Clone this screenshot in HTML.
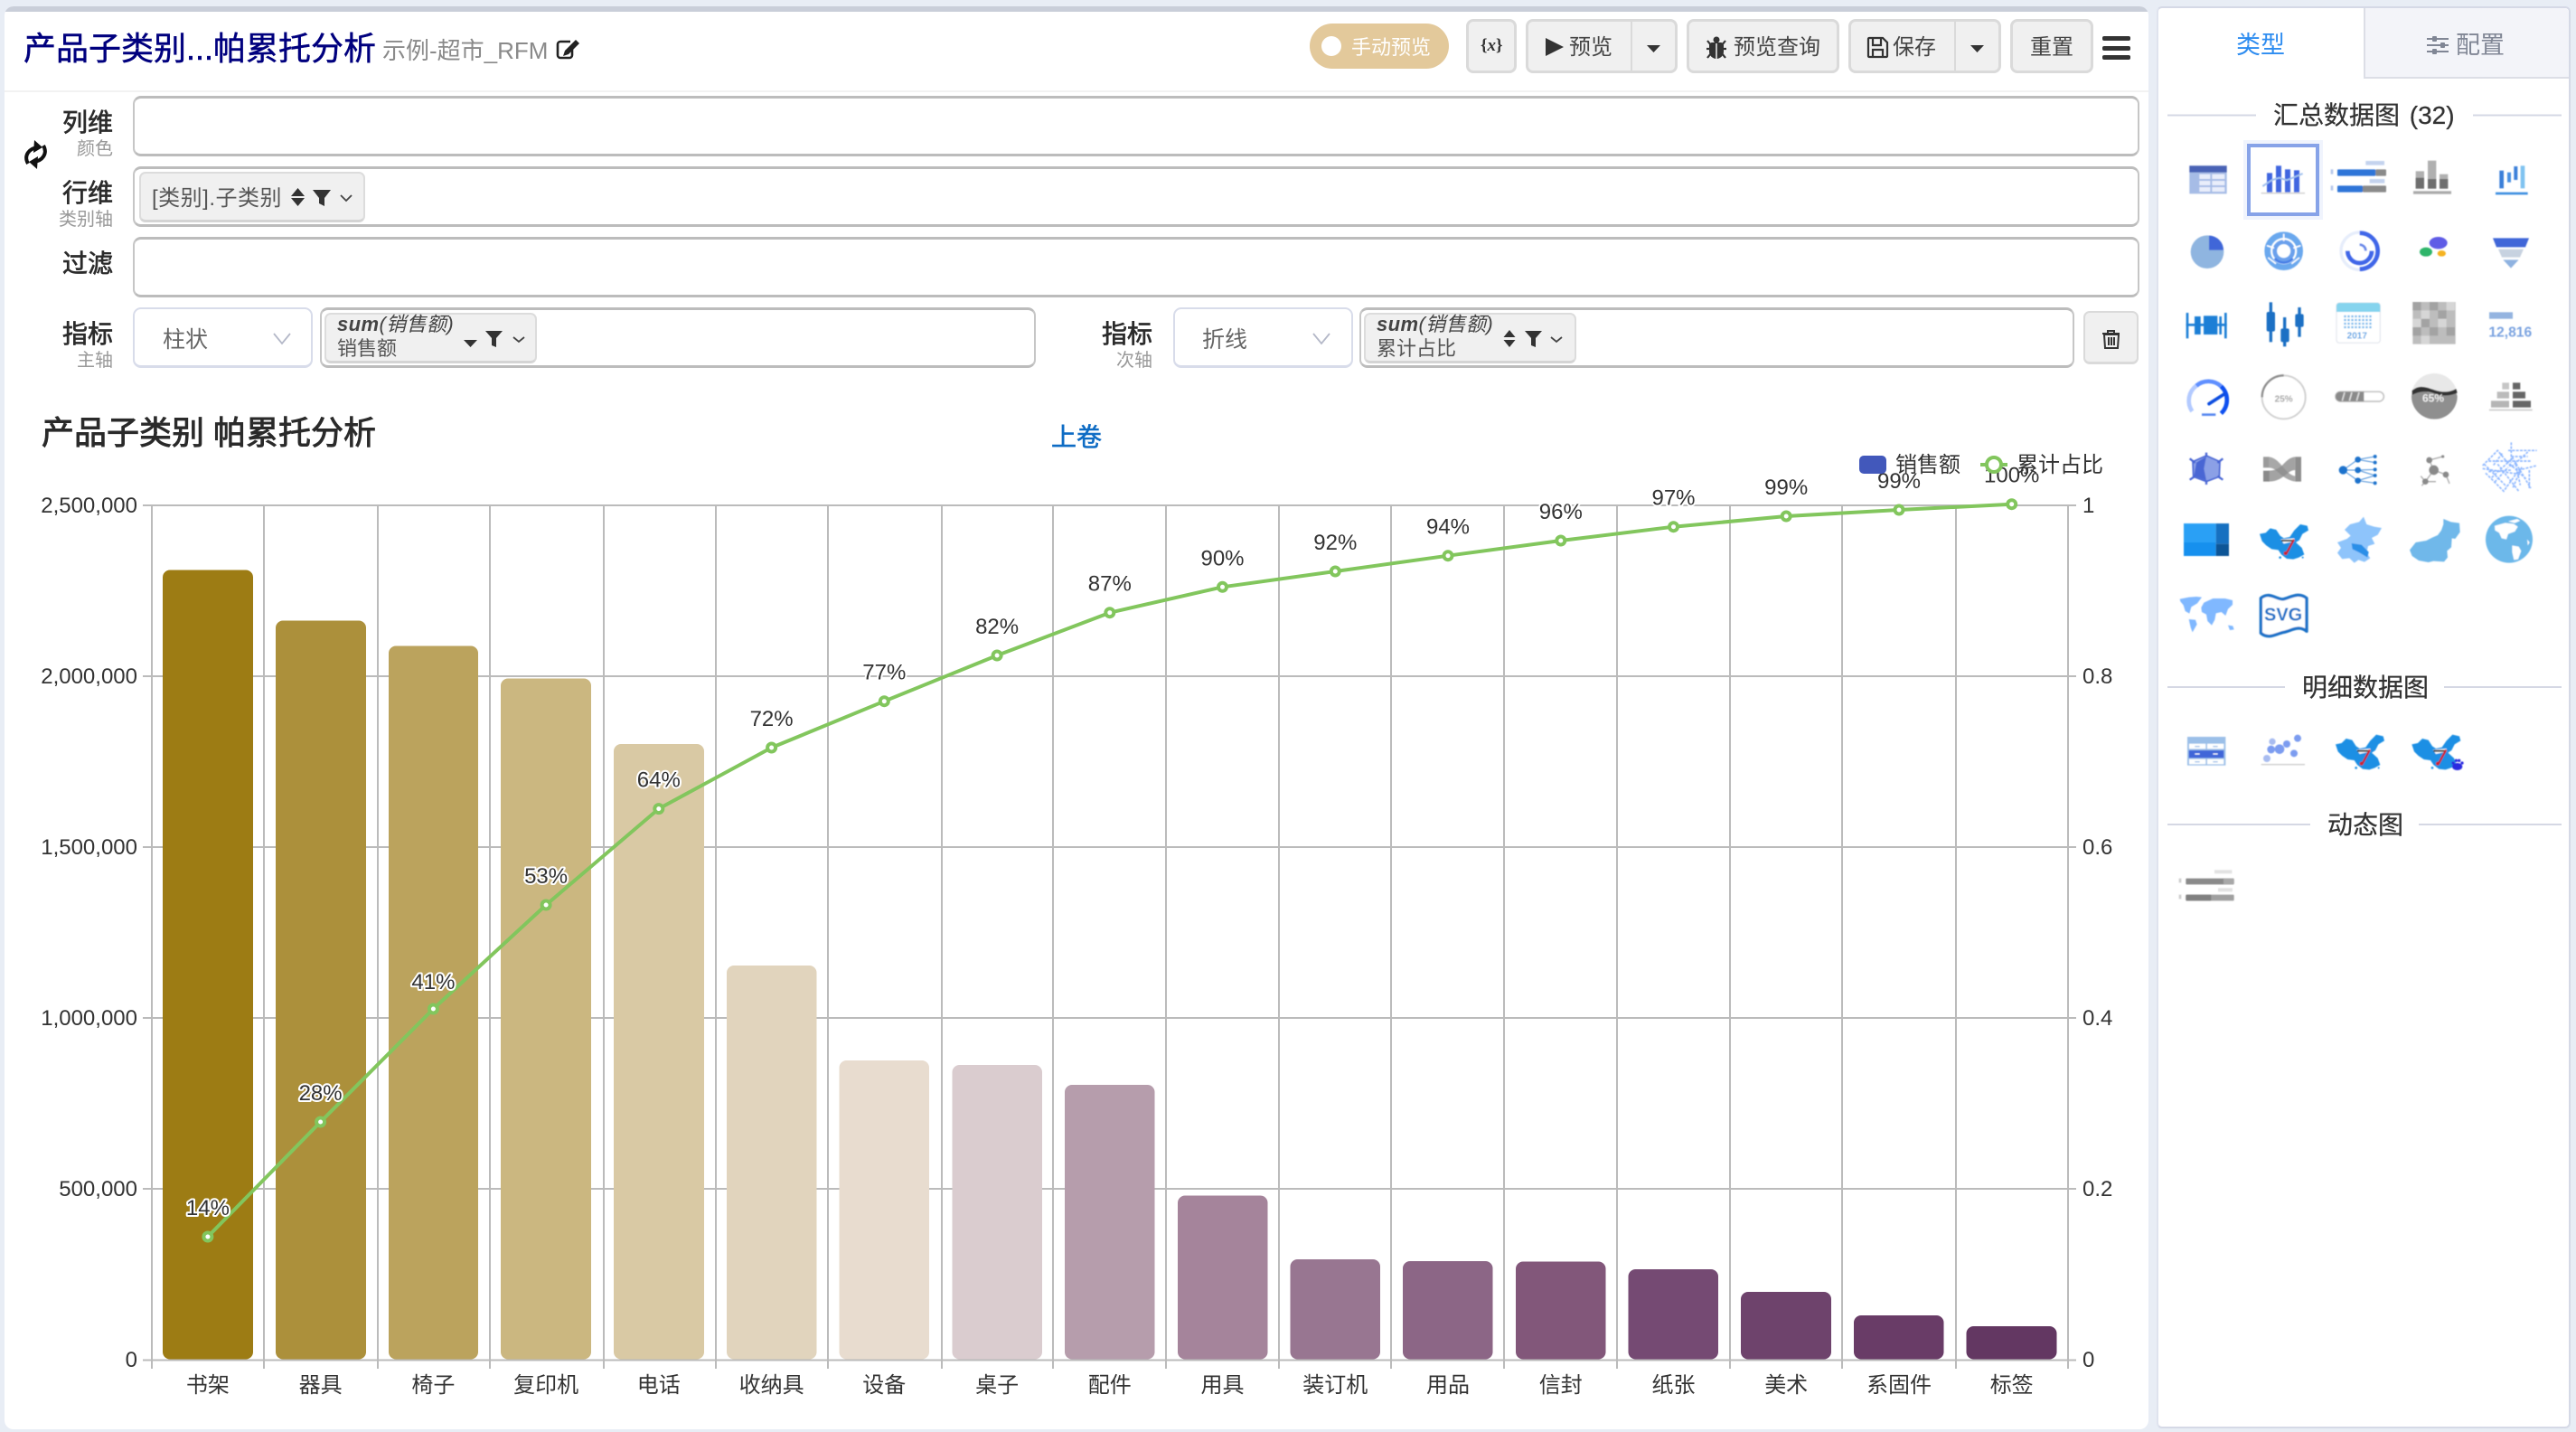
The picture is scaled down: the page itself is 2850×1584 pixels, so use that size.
<!DOCTYPE html>
<html lang="zh"><head><meta charset="utf-8"><title>帕累托分析</title>
<style>
html,body{margin:0;padding:0;width:2850px;height:1584px;overflow:hidden;background:#e8edf5}
body{font-family:"Liberation Sans","Noto Sans CJK SC",sans-serif;position:relative;color:#333}
.a{position:absolute;box-sizing:border-box}
.t{position:absolute;white-space:nowrap;line-height:40px;height:40px}
.box{position:absolute;box-sizing:border-box;left:147px;width:2220px;height:67px;background:#fff;border:2px solid #c6c6c6;border-top:3px solid #bcbcbc;border-bottom:3px solid #bcbcbc;border-radius:9px}
.lab{position:absolute;white-space:nowrap;line-height:40px;height:40px;right:2725px;font-size:28px;font-weight:400;color:#2b2b2b;-webkit-text-stroke:.7px #2b2b2b}
.sub{position:absolute;white-space:nowrap;line-height:30px;height:30px;right:2725px;font-size:20px;color:#999}
.tag{position:absolute;box-sizing:border-box;background:#f0f0f0;border:2px solid #dcdcdc;border-bottom:3px solid #d4d4d4;border-radius:7px;height:56px}
.btn{position:absolute;box-sizing:border-box;top:21px;height:60px;background:#f0f0f0;border:3px solid #dadada;border-radius:8px}
.sel{position:absolute;box-sizing:border-box;top:340px;height:67px;width:199px;background:#fff;border:2px solid #d8dcea;border-bottom:3px solid #d8dcea;border-radius:9px}
svg{position:absolute;left:0;top:0}
</style></head><body>

<!-- left panel -->
<div class="a" style="left:5px;top:7px;width:2372px;height:1574px;background:#fff;border-radius:10px;overflow:hidden"><div style="height:6px;background:#c9ced9"></div></div>
<div class="a" style="left:5px;top:100px;width:2372px;height:2px;background:#f2f2f2"></div>

<!-- right panel -->
<div class="a" style="left:2386px;top:7px;width:458px;height:1573px;background:#fff;border:2px solid #d5d9e6;border-left:2px solid #dfe3ee;border-radius:6px"></div>
<div class="a" style="left:2615px;top:9px;width:227px;height:78px;background:#f3f4f9;border-left:2px solid #dcdee6;border-bottom:2px solid #dcdee6;border-radius:0 5px 0 0"></div>

<!-- title -->
<div class="t" style="left:26px;top:34px;font-size:36px;color:#00007e;-webkit-text-stroke:.5px #00007e">产品子类别...帕累托分析</div>
<div class="t" style="left:423px;top:36px;font-size:26px;color:#8a8a8a">示例-超市_RFM</div>

<!-- toolbar -->
<div class="a" style="left:1449px;top:26px;width:154px;height:50px;background:#e3c99b;border-radius:25px"></div>
<div class="a" style="left:1462px;top:40px;width:22px;height:22px;background:#fff;border-radius:50%"></div>
<div class="t" style="left:1495px;top:33px;font-size:22px;color:#fff">手动预览</div>
<div class="btn" style="left:1622px;width:56px"></div>
<div class="t" style="left:1638px;top:31px;font-size:19px;font-weight:700;font-family:'Liberation Serif',serif;color:#333">{<i>x</i>}</div>
<div class="btn" style="left:1688px;width:168px"></div>
<div class="a" style="left:1804px;top:23px;width:2px;height:56px;background:#dadada"></div>
<div class="t" style="left:1736px;top:33px;font-size:24px;color:#444">预览</div>
<div class="btn" style="left:1866px;width:169px"></div>
<div class="t" style="left:1918px;top:33px;font-size:24px;color:#444">预览查询</div>
<div class="btn" style="left:2045px;width:169px"></div>
<div class="a" style="left:2162px;top:23px;width:2px;height:56px;background:#dadada"></div>
<div class="t" style="left:2094px;top:33px;font-size:24px;color:#444">保存</div>
<div class="btn" style="left:2224px;width:92px"></div>
<div class="t" style="left:2246px;top:33px;font-size:24px;color:#444">重置</div>
<div class="a" style="left:2326px;top:40px;width:31px;height:5px;background:#333;border-radius:2px"></div>
<div class="a" style="left:2326px;top:51px;width:31px;height:5px;background:#333;border-radius:2px"></div>
<div class="a" style="left:2326px;top:61px;width:31px;height:5px;background:#333;border-radius:2px"></div>

<!-- form rows -->
<div class="lab" style="top:116px">列维</div><div class="sub" style="top:150px">颜色</div>
<div class="lab" style="top:194px">行维</div><div class="sub" style="top:228px">类别轴</div>
<div class="lab" style="top:272px">过滤</div>
<div class="lab" style="top:350px">指标</div><div class="sub" style="top:384px">主轴</div>
<div class="box" style="top:106px"></div>
<div class="box" style="top:184px"></div>
<div class="box" style="top:262px"></div>
<div class="tag" style="left:154px;top:190px;width:250px"></div>
<div class="t" style="left:168px;top:200px;font-size:24px;color:#555;letter-spacing:.5px">[类别].子类别</div>

<div class="sel" style="left:147px"></div>
<div class="t" style="left:180px;top:356px;font-size:25px;color:#666">柱状</div>
<div class="box" style="left:354px;top:340px;width:792px"></div>
<div class="tag" style="left:359px;top:346px;width:235px"></div>
<div class="t" style="left:373px;top:339px;font-size:22px;color:#444;font-style:italic;letter-spacing:.4px"><b>sum</b>(销售额)</div>
<div class="t" style="left:373px;top:366px;font-size:22px;color:#555">销售额</div>

<div class="lab" style="top:350px;right:auto;left:1219px">指标</div>
<div class="sub" style="top:384px;right:auto;left:1235px">次轴</div>
<div class="sel" style="left:1298px"></div>
<div class="t" style="left:1330px;top:356px;font-size:25px;color:#666">折线</div>
<div class="box" style="left:1504px;top:340px;width:791px"></div>
<div class="tag" style="left:1509px;top:346px;width:235px"></div>
<div class="t" style="left:1523px;top:339px;font-size:22px;color:#444;font-style:italic;letter-spacing:.4px"><b>sum</b>(销售额)</div>
<div class="t" style="left:1523px;top:366px;font-size:22px;color:#555">累计占比</div>
<div class="a" style="left:2305px;top:344px;width:61px;height:59px;background:#f0f0f0;border:2px solid #dadada;border-bottom:3px solid #dadada;border-radius:7px"></div>

<!-- small UI icons -->
<svg width="2850" height="1584" viewBox="0 0 2850 1584">
 <!-- edit -->
 <g fill="none" stroke="#222" stroke-width="2.6"><path d="M633 54v7a3 3 0 0 1-3 3h-10a3 3 0 0 1-3-3V49a3 3 0 0 1 3-3h11"/></g>
 <path d="M637 44l4 4-12 12-6 2 2-6z" fill="#222"/>
 <!-- sync -->
 <g fill="none" stroke="#111" stroke-width="4"><path d="M42 163C32 164 26 172 31 181"/><path d="M37 179C47 178 53 170 48 161"/></g>
 <path d="M38 155L47 163L37 169ZM41 187L32 179L42 173Z" fill="#111"/>
 <!-- play + carets -->
 <path d="M1710 42l20 10-20 10z" fill="#333"/>
 <path d="M1822 50h15l-7.500 8z" fill="#333"/>
 <path d="M2180 50h15l-7.500 8z" fill="#333"/>
 <!-- bug -->
 <g fill="#333"><circle cx="1899" cy="44" r="3.500"/><path d="M1894 47h10a3 3 0 0 1 3 3v7a8 8 0 0 1-16 0v-7a3 3 0 0 1 3-3z"/></g>
 <g stroke="#333" stroke-width="2.200" fill="none"><path d="M1889 45l4 5M1909 45l-4 5M1888 54h5M1910 54h-5M1889 64l4-5M1909 64l-4-5"/></g>
 <path d="M1899 48v18" stroke="#f0f0f0" stroke-width="1.500"/>
 <!-- floppy -->
 <g fill="none" stroke="#333" stroke-width="2.200"><path d="M2068 42h15l5 5v15a1 1 0 0 1-1 1h-19a1 1 0 0 1-1-1V43a1 1 0 0 1 1-1z"/><path d="M2072 43v7h9v-7M2072 62v-7h11v7"/></g>
 <!-- sort / filter / chevrons : tag1 -->
 <path d="M329.500 208l7.500 9h-15zM329.500 228l-7.500-9h15z" fill="#333"/>
 <path d="M346 210h20l-7 9v9l-6-3v-6z" fill="#333"/>
 <path d="M377 216l6 6 6-6" fill="none" stroke="#444" stroke-width="1.800"/>
 <!-- tag2 -->
 <path d="M513 376h15l-7.500 8z" fill="#333"/>
 <path d="M537 366h19l-7 8v10l-5-2v-8z" fill="#333"/>
 <path d="M568 373l6 5 6-5" fill="none" stroke="#444" stroke-width="1.800"/>
 <!-- tag3 -->
 <path d="M1670 365l6.500 8h-13zM1670 384l-6.500-8h13z" fill="#333"/>
 <path d="M1687 366h19l-7 8v10l-5-2v-8z" fill="#333"/>
 <path d="M1716 373l6 5 6-5" fill="none" stroke="#444" stroke-width="1.800"/>
 <!-- select chevrons -->
 <path d="M303 369l9 11 9-11M1453 369l9 11 9-11" fill="none" stroke="#b4b8c8" stroke-width="1.800"/>
 <!-- trash -->
 <g fill="none" stroke="#333" stroke-width="2"><path d="M2328 370h16l-1 15h-14zM2326 369h19M2332 369v-3h7v3M2333 373v9M2336 373v9M2339 373v9"/></g>
 <!-- sliders -->
 <g stroke="#808695" stroke-width="2"><path d="M2685 43h24M2685 50h24M2685 57h24"/></g>
 <g fill="#808695"><rect x="2691" y="40" width="5" height="6" rx="1"/><rect x="2700" y="47" width="5" height="6" rx="1"/><rect x="2691" y="54" width="5" height="6" rx="1"/></g>

 <!-- CHART -->
 <g stroke="#bbb" stroke-width="2" fill="none">
  <path d="M158 559H2297M158 748H2297M158 937H2297M158 1126H2297M158 1315H2297M158 1504.500H2297"/>
  <path d="M168 559V1514M292 559V1514M418 559V1514M542 559V1514M668 559V1514M792 559V1514M916 559V1514M1042 559V1514M1165 559V1514M1290 559V1514M1415 559V1514M1539 559V1514M1664 559V1514M1789 559V1514M1914 559V1514M2038 559V1514M2164 559V1514M2288 559V1514"/>
 </g>
 <g>
  <rect x="180" y="630.500" width="100" height="873" rx="8" fill="#9d7c14"/>
  <rect x="305" y="686.500" width="100" height="817" rx="8" fill="#ac903b"/>
  <rect x="430" y="714.500" width="99" height="789" rx="8" fill="#bba35d"/>
  <rect x="554" y="750.500" width="100" height="753" rx="8" fill="#cbb780"/>
  <rect x="679" y="823" width="100" height="680.500" rx="8" fill="#d9c9a4"/>
  <rect x="804" y="1068" width="99.500" height="435.500" rx="8" fill="#e1d4bd"/>
  <rect x="928.500" y="1173" width="99.500" height="330.500" rx="8" fill="#e8dccf"/>
  <rect x="1053.500" y="1178" width="99.500" height="325.500" rx="8" fill="#dacccf"/>
  <rect x="1178" y="1200" width="99.500" height="303.500" rx="8" fill="#b69dac"/>
  <rect x="1303" y="1322.500" width="99.500" height="181" rx="8" fill="#a5849b"/>
  <rect x="1427.500" y="1393" width="99.500" height="110.500" rx="8" fill="#987691"/>
  <rect x="1552" y="1395" width="99.500" height="108.500" rx="8" fill="#8c6686"/>
  <rect x="1677" y="1395.500" width="99.500" height="108" rx="8" fill="#82577a"/>
  <rect x="1801.500" y="1404" width="99.500" height="99.500" rx="8" fill="#754a73"/>
  <rect x="1926" y="1429" width="100" height="74.500" rx="8" fill="#6e436c"/>
  <rect x="2051" y="1455" width="99.500" height="48.500" rx="8" fill="#693c67"/>
  <rect x="2175.500" y="1467" width="100" height="36.500" rx="8" fill="#633762"/>
 </g>
 <polyline fill="none" stroke="#82c65d" stroke-width="4" stroke-linejoin="round" points="229.900,1368 354.600,1241 479.400,1116 604.100,1001 728.800,894.600 853.600,827 978.300,775.700 1103.100,725 1227.800,677.700 1352.500,649.300 1477.300,632 1602,614.700 1726.800,598 1851.500,582.700 1976.200,571 2101,564 2225.700,557.700"/>
 <g fill="#fff" stroke="#82c65d" stroke-width="4">
  <circle cx="229.900" cy="1368" r="4.500"/><circle cx="354.600" cy="1241" r="4.500"/><circle cx="479.400" cy="1116" r="4.500"/><circle cx="604.100" cy="1001" r="4.500"/><circle cx="728.800" cy="894.600" r="4.500"/><circle cx="853.600" cy="827" r="4.500"/><circle cx="978.300" cy="775.700" r="4.500"/><circle cx="1103.100" cy="725" r="4.500"/><circle cx="1227.800" cy="677.700" r="4.500"/><circle cx="1352.500" cy="649.300" r="4.500"/><circle cx="1477.300" cy="632" r="4.500"/><circle cx="1602" cy="614.700" r="4.500"/><circle cx="1726.800" cy="598" r="4.500"/><circle cx="1851.500" cy="582.700" r="4.500"/><circle cx="1976.200" cy="571" r="4.500"/><circle cx="2101" cy="564" r="4.500"/><circle cx="2225.700" cy="557.700" r="4.500"/>
 </g>
 <g font-family="'Liberation Sans','Noto Sans CJK SC',sans-serif" font-size="24" fill="#333">
  <!-- y axis -->
  <g text-anchor="end">
   <text x="152" y="567">2,500,000</text><text x="152" y="756">2,000,000</text><text x="152" y="945">1,500,000</text><text x="152" y="1134">1,000,000</text><text x="152" y="1323">500,000</text><text x="152" y="1512">0</text>
  </g>
  <text x="2304" y="567">1</text><text x="2304" y="756">0.8</text><text x="2304" y="945">0.6</text><text x="2304" y="1134">0.4</text><text x="2304" y="1323">0.2</text><text x="2304" y="1512">0</text>
  <!-- x axis -->
  <g text-anchor="middle">
   <text x="229.900" y="1540">书架</text><text x="354.600" y="1540">器具</text><text x="479.400" y="1540">椅子</text><text x="604.100" y="1540">复印机</text><text x="728.800" y="1540">电话</text><text x="853.600" y="1540">收纳具</text><text x="978.300" y="1540">设备</text><text x="1103.100" y="1540">桌子</text><text x="1227.800" y="1540">配件</text><text x="1352.500" y="1540">用具</text><text x="1477.300" y="1540">装订机</text><text x="1602" y="1540">用品</text><text x="1726.800" y="1540">信封</text><text x="1851.500" y="1540">纸张</text><text x="1976.200" y="1540">美术</text><text x="2101" y="1540">系固件</text><text x="2225.700" y="1540">标签</text>
  </g>
  <!-- data labels -->
  <g text-anchor="middle" stroke="#fff" stroke-width="4" paint-order="stroke" stroke-linejoin="round">
   <text x="229.900" y="1344">14%</text><text x="354.600" y="1217">28%</text><text x="479.400" y="1094">41%</text><text x="604.100" y="977">53%</text><text x="728.800" y="870.600">64%</text><text x="853.600" y="803">72%</text><text x="978.300" y="751.700">77%</text><text x="1103.100" y="701">82%</text><text x="1227.800" y="653.700">87%</text><text x="1352.500" y="625.300">90%</text><text x="1477.300" y="608">92%</text><text x="1602" y="590.700">94%</text><text x="1726.800" y="574">96%</text><text x="1851.500" y="558.700">97%</text><text x="1976.200" y="547">99%</text><text x="2101" y="540">99%</text><text x="2225.700" y="533.700">100%</text>
  </g>
  <!-- legend -->
  <rect x="2057" y="504" width="30" height="20" rx="5" fill="#4258bb"/>
  <text x="2097" y="522">销售额</text>
  <path d="M2191 514h30" stroke="#82c65d" stroke-width="4"/>
  <circle cx="2206" cy="514" r="8" fill="#fff" stroke="#82c65d" stroke-width="4"/>
  <text x="2231" y="522">累计占比</text>
  <text x="46" y="491" font-size="36" fill="#2a2a2a" stroke="#2a2a2a" stroke-width=".9">产品子类别 帕累托分析</text>
  <text x="1163" y="493" font-size="28" fill="#0f6cc4" stroke="#0f6cc4" stroke-width=".6">上卷</text>
 </g>

 <!-- sidebar headings -->
 <g font-family="'Liberation Sans','Noto Sans CJK SC',sans-serif" fill="#333">
  <text x="2474" y="59" font-size="27" fill="#2d8cf0">类型</text>
  <text x="2717" y="59" font-size="27" fill="#808695">配置</text>
  <g font-size="28" stroke="#333" stroke-width=".25">
  <text x="2515" y="137" style="word-spacing:3px">汇总数据图 (32)</text>
  <text x="2547" y="770">明细数据图</text>
  <text x="2575" y="922">动态图</text>
  </g>
 </g>
 <g stroke="#d5d8e4" stroke-width="2">
  <path d="M2398 127.500H2496M2736 127.500H2834M2398 760H2528M2704 760H2834M2398 912H2556M2676 912H2834"/>
 </g>
 <rect x="2484" y="157" width="84" height="84" fill="none" stroke="#f0f4fd" stroke-width="4"/>
 <rect x="2488" y="161" width="76" height="76" fill="#fff" stroke="#87a3e8" stroke-width="4"/>

 <defs>
  <filter id="b" x="-5%" y="-5%" width="110%" height="110%"><feGaussianBlur stdDeviation="1.800"/></filter>
  <g id="cn">
   <path d="M390 572L410 568L425 553L445 558L458 578L470 586L490 582L505 560L525 540L548 545L552 560L532 572L522 592L510 600L530 618L538 640L520 650L502 656L480 654L462 640L452 625L430 622L412 610L398 596Z" fill="#1b8fe4"/>
   <circle cx="458" cy="650" r="4" fill="#1b8fe4"/><circle cx="533" cy="650" r="3" fill="#1b8fe4"/>
   <path d="M460 590L505 586L506 596L470 604Z" fill="#fff"/>
   <path d="M462 594H502" stroke="#333" stroke-width="6"/>
   <path d="M504 590L478 638" stroke="#d2232a" stroke-width="7"/>
   <circle cx="476" cy="636" r="6" fill="#d2232a"/>
  </g>
 </defs>

 <!-- icons rows 1-3 (zoom coords) -->
 <g filter="url(#b)" transform="translate(2370,0) scale(.33333)">
  <!-- table -->
  <rect x="157" y="550" width="124" height="93" fill="#a6bce6"/><rect x="157" y="550" width="124" height="22" fill="#4a62b5"/>
  <g fill="#e9eefb"><rect x="190" y="578" width="36" height="16"/><rect x="232" y="578" width="42" height="16"/><rect x="190" y="600" width="36" height="15"/><rect x="232" y="600" width="42" height="15"/><rect x="190" y="621" width="36" height="15"/><rect x="232" y="621" width="42" height="15"/></g>
  <!-- selected combo -->
  <g fill="#3f66e0"><rect x="414" y="574" width="18" height="64"/><rect x="444" y="550" width="18" height="88"/><rect x="474" y="562" width="18" height="76"/><rect x="504" y="565" width="18" height="73"/></g>
  <rect x="395" y="639" width="145" height="4" fill="#ccc"/>
  <path d="M400 618l30-20 25-8 25 8 25-10 28-12" fill="none" stroke="#9fc0ee" stroke-width="6"/>
  <!-- h bars -->
  <rect x="648" y="562" width="127" height="22" rx="3" fill="#2f74d8"/><rect x="775" y="562" width="35" height="22" rx="3" fill="#8a8a8a"/>
  <rect x="648" y="616" width="84" height="22" rx="3" fill="#2f74d8"/><rect x="732" y="616" width="78" height="22" rx="3" fill="#8a8a8a"/>
  <rect x="742" y="534" width="62" height="14" fill="#c4d3ee"/><rect x="755" y="594" width="50" height="14" fill="#c4d3ee"/>
  <rect x="626" y="562" width="8" height="16" fill="#b6c8ea"/><rect x="626" y="616" width="8" height="16" fill="#b6c8ea"/>
  <!-- stacked grey -->
  <g fill="#b0b0b0"><rect x="908" y="568" width="28" height="58"/><rect x="948" y="533" width="28" height="93"/><rect x="987" y="578" width="28" height="48"/></g>
  <g fill="#6e6e6e"><rect x="908" y="590" width="28" height="36"/><rect x="948" y="594" width="28" height="32"/><rect x="987" y="594" width="28" height="32"/></g>
  <rect x="900" y="634" width="126" height="10" fill="#aaa"/>
  <!-- waterfall -->
  <rect x="1186" y="566" width="14" height="59" fill="#3b7fd9"/><rect x="1212" y="572" width="12" height="33" fill="#4a90e2"/><rect x="1234" y="552" width="12" height="45" fill="#3b7fd9"/><rect x="1256" y="550" width="14" height="75" fill="#7fc3f0"/><rect x="1173" y="638" width="107" height="8" fill="#3b8ee0"/>
  <!-- pie -->
  <circle cx="216" cy="836" r="55" fill="#8fb5e0"/><path d="M222 830V782A48 48 0 0 1 270 830Z" fill="#3f66d8"/>
  <!-- donut -->
  <circle cx="470" cy="833" r="54" fill="none" stroke="#6aa8ee" stroke-width="20"/><circle cx="470" cy="833" r="30" fill="none" stroke="#6aa0ec" stroke-width="14"/>
  <path d="M500 858A40 40 0 0 1 440 858" fill="none" stroke="#4a80e6" stroke-width="8"/>
  <path d="M418 855l26 20M522 855l-26 20M470 776v24M414 815l24 8M526 815l-24 8" stroke="#fff" stroke-width="5"/>
  <!-- radial -->
  <circle cx="722" cy="833" r="62" fill="none" stroke="#e6edfb" stroke-width="10"/>
  <path d="M722 773A60 60 0 0 1 722 893" fill="none" stroke="#3f66e8" stroke-width="14"/>
  <path d="M762 833A40 40 0 0 1 682 833" fill="none" stroke="#3f66e8" stroke-width="14"/>
  <path d="M722 812A20 20 0 0 1 742 832" fill="none" stroke="#6a88e8" stroke-width="8"/>
  <!-- bubbles -->
  <ellipse cx="983" cy="806" rx="30" ry="20" fill="#5e5ce6"/><ellipse cx="942" cy="836" rx="21" ry="15" fill="#2fb56b"/><ellipse cx="994" cy="841" rx="14" ry="10" fill="#f5b324"/>
  <!-- funnel -->
  <path d="M1164 790H1284L1272 820H1176Z" fill="#3f66d8"/><path d="M1182 827H1266L1254 854H1194Z" fill="#c7d2e0"/><path d="M1198 862H1250L1224 890Z" fill="#8eb2e0"/>
  <!-- box -->
  <g fill="#1f7fd6"><rect x="146" y="1038" width="8" height="85"/><rect x="273" y="1038" width="8" height="85"/><rect x="146" y="1074" width="135" height="8"/><rect x="174" y="1050" width="20" height="60"/><rect x="204" y="1048" width="46" height="62"/><rect x="256" y="1050" width="8" height="60"/></g>
  <!-- candles -->
  <g fill="#1a6fc4"><rect x="422" y="1003" width="10" height="132"/><rect x="413" y="1035" width="28" height="65" rx="6"/><rect x="468" y="1053" width="10" height="97"/><rect x="460" y="1090" width="28" height="45" rx="6"/><rect x="517" y="1020" width="10" height="98"/><rect x="508" y="1042" width="28" height="43" rx="6"/></g>
  <!-- calendar -->
  <rect x="645" y="1005" width="145" height="133" rx="10" fill="#fff" stroke="#e6e9ef" stroke-width="4"/>
  <path d="M645 1035v-20a10 10 0 0 1 10-10h125a10 10 0 0 1 10 10v20z" fill="#86d4ee"/>
  <g stroke="#74b8ec" stroke-width="7" stroke-dasharray="7 5"><path d="M670 1050H762M670 1062H762M670 1074H762M670 1086H762"/></g>
  <text x="680" y="1124" font-family="'Liberation Sans',sans-serif" font-size="30" font-weight="700" fill="#5aa5e5">2017</text>
  <!-- heatmap -->
  <rect x="898" y="1002" width="142" height="140" fill="#bdbdbd"/>
  <g fill="#a3a3a3"><rect x="898" y="1002" width="28" height="28"/><rect x="954" y="1002" width="28" height="28"/><rect x="926" y="1058" width="28" height="28"/><rect x="982" y="1030" width="28" height="28"/><rect x="898" y="1086" width="28" height="28"/><rect x="1010" y="1086" width="28" height="28"/><rect x="954" y="1086" width="28" height="28"/></g>
  <g fill="#d6d6d6"><rect x="926" y="1030" width="28" height="28"/><rect x="1010" y="1002" width="28" height="28"/><rect x="982" y="1058" width="28" height="28"/><rect x="926" y="1114" width="28" height="28"/><rect x="898" y="1058" width="28" height="28"/></g>
  <!-- number -->
  <rect x="1152" y="1036" width="78" height="22" fill="#94b4e0"/>
  <text x="1150" y="1118" font-family="'Liberation Sans',sans-serif" font-size="47" font-weight="700" fill="#7aa3e0">12,816</text>
 </g>

 <!-- rows 4-7 -->
 <g filter="url(#b)" transform="translate(2370,400) scale(.33333)">
  <!-- gauge -->
  <path d="M166 165A62 62 0 0 1 180 80" fill="none" stroke="#b3caff" stroke-width="14"/>
  <path d="M180 80A62 62 0 0 1 262 82" fill="none" stroke="#5f8fff" stroke-width="14"/>
  <path d="M262 82A62 62 0 0 1 262 172" fill="none" stroke="#0a50f0" stroke-width="14"/>
  <path d="M222 140L272 108" stroke="#0a4de0" stroke-width="11" stroke-linecap="round"/>
  <rect x="198" y="172" width="46" height="8" fill="#5b8bf0"/>
  <!-- 25% -->
  <circle cx="470" cy="118" r="72" fill="none" stroke="#d2d2d2" stroke-width="6"/>
  <path d="M398 118A72 72 0 0 1 470 46" fill="none" stroke="#8e8e8e" stroke-width="7"/>
  <text x="440" y="133" font-family="'Liberation Sans',sans-serif" font-size="30" fill="#aaa" font-weight="700">25%</text>
  <!-- progress -->
  <rect x="642" y="100" width="160" height="32" rx="16" fill="#fff" stroke="#c4c4c4" stroke-width="5"/>
  <path d="M642 116a16 16 0 0 1 16-16h78v32h-78a16 16 0 0 1-16-16z" fill="#8a8a8a"/>
  <path d="M672 102l-8 28M696 102l-8 28M720 102l-8 28" stroke="#ddd" stroke-width="5"/>
  <!-- wave ball -->
  <circle cx="970" cy="115" r="76" fill="#e8e8e8"/>
  <path d="M894 115a76 76 0 0 0 152 0c-2-8-4-12-6-16-20 14-42 14-70 8s-46-14-70-6c-3 4-5 8-6 14z" fill="#8f8f8f"/>
  <path d="M896 96c25-22 50-10 74-2s48 10 72-4l4 14c-30 12-50 10-76 2s-46-10-74 5z" fill="#333"/>
  <text x="930" y="133" font-family="'Liberation Sans',sans-serif" font-size="36" fill="#eee" font-weight="700">65%</text>
  <!-- pyramid -->
  <rect x="1195" y="70" width="23" height="22" fill="#c6c6c6"/><rect x="1178" y="100" width="40" height="22" fill="#bbb"/><rect x="1158" y="130" width="60" height="22" fill="#b5b5b5"/>
  <rect x="1230" y="70" width="25" height="22" fill="#666"/><rect x="1230" y="100" width="42" height="22" fill="#666"/><rect x="1230" y="130" width="60" height="22" fill="#666"/>
  <rect x="1152" y="158" width="143" height="5" fill="#ccc"/>
  <!-- radar -->
  <path d="M213 312L258 332L256 382L213 398L170 382L168 332Z" fill="#8ba0e6" stroke="#4a66d4" stroke-width="5"/>
  <path d="M213 315L180 335L172 380L213 395L205 355Z" fill="#4a66d4"/>
  <path d="M158 322l18 14M268 322l-18 14M158 392l18-12M268 392l-18-12M213 302v14M213 408v-14" stroke="#4a66d4" stroke-width="7"/>
  <!-- sankey -->
  <rect x="402" y="316" width="20" height="36" fill="#9a9a9a"/><rect x="402" y="362" width="20" height="36" fill="#8a8a8a"/><rect x="508" y="316" width="20" height="82" fill="#8d8d8d"/>
  <path d="M420 316C460 320 470 372 508 380V398C460 390 450 352 420 352Z" fill="#a8a8a8"/><path d="M420 362C470 362 470 320 508 316V360C480 360 470 398 420 398Z" fill="#8c8c8c" opacity=".8"/>
  <!-- tree -->
  <g stroke="#4a8fd8" stroke-width="3" fill="none"><path d="M667 360L716 325M667 360H716M667 360L716 395M716 325L773 315M716 325L773 335M716 360L773 358M716 360L773 378M716 395L773 378M716 395L773 403"/></g>
  <g fill="#1d72cc"><circle cx="667" cy="360" r="14"/><circle cx="716" cy="325" r="10"/><circle cx="716" cy="360" r="10"/><circle cx="716" cy="395" r="10"/><circle cx="773" cy="315" r="6"/><circle cx="773" cy="335" r="6"/><circle cx="773" cy="358" r="6"/><circle cx="773" cy="378" r="6"/><circle cx="773" cy="403" r="6"/></g>
  <!-- graph -->
  <g stroke="#aaa" stroke-width="4" fill="none"><path d="M968 360L953 327L998 315M968 360L1008 375L1020 405M968 360L940 398L925 380M940 398L975 398M940 398L928 412"/></g>
  <g fill="#8a8a8a"><circle cx="968" cy="360" r="16"/><circle cx="953" cy="327" r="10"/><circle cx="1008" cy="375" r="10"/><circle cx="940" cy="398" r="10"/><circle cx="998" cy="315" r="5"/></g>
  <!-- scribble -->
  <g stroke="#8fb8ff" stroke-width="5" fill="none" stroke-dasharray="9 4"><path d="M1130 345L1180 295L1225 350L1280 300M1140 370L1200 430L1250 360L1310 345M1225 268V335M1150 330H1290M1215 295H1310M1130 355L1260 375M1160 385L1230 320L1290 420M1180 340L1250 430M1225 315L1280 315M1285 360V420M1135 340L1210 415M1195 305L1165 345M1240 340L1255 410M1260 350L1230 420M1150 365L1225 360M1210 330L1275 390M1170 400L1215 350"/></g>
  <!-- treemap -->
  <rect x="138" y="537" width="107" height="63" fill="#2aa0f5"/><rect x="138" y="600" width="107" height="45" fill="#1990ee"/><rect x="245" y="537" width="43" height="68" fill="#1370c0"/><rect x="245" y="605" width="43" height="40" fill="#0d5596"/>
  <use href="#cn"/>
  <!-- region map -->
  <path d="M735 515L745 540L770 548L795 552L782 575L762 585L772 605L750 612L745 635L757 652L738 665L718 658L704 668L688 652L664 655L648 635L660 618L648 600L680 588L692 578L672 558L690 540L720 532Z" fill="#8ec4fb"/>
  <path d="M695 603L728 608L752 632L748 650L722 634L698 622Z" fill="#2b8fe8"/>
  <!-- province map -->
  <path d="M1000 522L1025 532L1053 536L1055 566L1039 588L1028 586L1026 616L1012 628L1014 650L1002 664L967 662L950 666L918 660L896 645L888 625L908 600L943 594L963 584L981 576L993 560L1000 540Z" fill="#6fb8ea"/>
  <!-- globe -->
  <circle cx="1218" cy="590" r="78" fill="#6cb8ea"/>
  <path d="M1170 545l35-10 28 3 14 10-10 16-22 8-6 18-16-4-8-18-14-8zM1228 610l22 4 8 14-10 28-14 2-6-26zM1215 530l30-8 10 6-18 8z" fill="#fff"/>
  <path d="M1278 590l8 10-6 10z" fill="#fff"/>
  <!-- world -->
  <path d="M125 788l30-6 25-2 18 2-15 20-20 12-6 22-14-8-6-20-10-12zM155 855l22 2 5 15-15 26-6-16z" fill="#80b8ff"/>
  <path d="M205 800l30-14 40 0 25 6 0 15-15 14-8 22-14-12-18 4-4 22-10 18-14-14-4-22-15-8-2-15zM285 875l16 2 4 12-14 2z" fill="#80b8ff"/>
  <!-- svg icon -->
  <path d="M394 785c30-25 55 8 76 3s50-25 76-3V895c-26-22-50-2-76 3s-50 25-76 3Z" fill="#fff" stroke="#1e72c8" stroke-width="10" stroke-linejoin="round"/>
  <text x="405" y="860" font-family="'Liberation Sans',sans-serif" font-size="60" font-weight="700" fill="#1e72c8">SVG</text>
 </g>

 <g filter="url(#b)" transform="translate(2370,700) scale(.33333)">
  <!-- detail table -->
  <rect x="150" y="345" width="127" height="95" fill="#9bbfe8"/>
  <rect x="155" y="390" width="116" height="25" fill="#3f66d8"/>
  <g fill="#fff"><rect x="156" y="368" width="55" height="17"/><rect x="216" y="368" width="55" height="17"/><rect x="156" y="419" width="55" height="17"/><rect x="216" y="419" width="55" height="17"/></g>
  <g fill="#9bbfe8"><rect x="175" y="375" width="16" height="4"/><rect x="235" y="375" width="16" height="4"/><rect x="175" y="426" width="16" height="4"/><rect x="235" y="426" width="16" height="4"/></g>
  <g fill="#fff"><rect x="175" y="400" width="16" height="4"/><rect x="235" y="400" width="16" height="4"/></g>
  <!-- scatter -->
  <g fill="#7b9cf0"><circle cx="516" cy="350" r="12"/><circle cx="480" cy="369" r="12"/><circle cx="456" cy="386" r="16"/><circle cx="428" cy="387" r="13"/><circle cx="504" cy="400" r="12"/></g>
  <circle cx="432" cy="361" r="11" fill="#a8bcf0"/><circle cx="414" cy="417" r="12" fill="#a8bcf0"/>
  <rect x="395" y="435" width="145" height="4" fill="#ccc"/>
  <!-- maps -->
  <use href="#cn" transform="translate(252,-202)"/>
  <use href="#cn" transform="translate(505,-202)"/>
  <g fill="#2a2ae0"><ellipse cx="1046" cy="444" rx="17" ry="12"/><circle cx="1032" cy="432" r="5"/><circle cx="1042" cy="424" r="5"/><circle cx="1052" cy="424" r="5"/><circle cx="1062" cy="432" r="5"/></g>
  <!-- dyn bars -->
  <rect x="145" y="815" width="160" height="20" rx="3" fill="#8a8a8a"/><rect x="270" y="815" width="35" height="20" rx="3" fill="#a8a8a8"/>
  <rect x="145" y="869" width="160" height="20" rx="3" fill="#a0a0a0"/><rect x="145" y="869" width="84" height="20" rx="3" fill="#808080"/>
  <rect x="240" y="787" width="58" height="12" fill="#e2e2e2"/><rect x="252" y="847" width="48" height="12" fill="#e2e2e2"/>
  <rect x="122" y="815" width="8" height="14" fill="#ccc"/><rect x="122" y="869" width="8" height="14" fill="#ccc"/>
 </g>
</svg>
</body></html>
